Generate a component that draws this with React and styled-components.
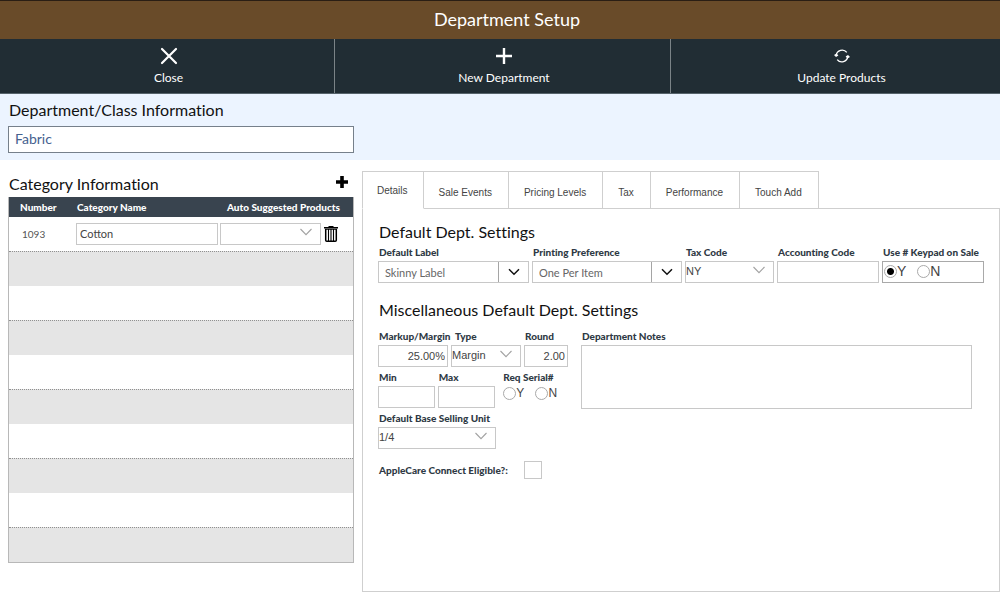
import { useState } from "react";
import styled, { createGlobalStyle, css } from "styled-components";

const tabs = [
  "Details",
  "Sale Events",
  "Pricing Levels",
  "Tax",
  "Performance",
  "Touch Add",
];

const emptyRows = [1, 2, 3, 4, 5, 6, 7, 8, 9];

function CloseIcon() {
  return (
    <svg width="18" height="18" viewBox="0 0 18 18" aria-hidden="true">
      <path
        d="M2 2L16 16M16 2L2 16"
        stroke="#fff"
        strokeWidth="2.2"
        strokeLinecap="round"
      />
    </svg>
  );
}

function PlusIcon() {
  return (
    <svg width="18" height="18" viewBox="0 0 18 18" aria-hidden="true">
      <path d="M9 1V17M1 9H17" stroke="#fff" strokeWidth="2.4" />
    </svg>
  );
}

function RefreshIcon() {
  return (
    <svg width="18" height="18" viewBox="0 0 18 18" aria-hidden="true">
      <g fill="none" stroke="#fff" strokeWidth="1.3">
        <path d="M3.2 8.4A6 6 0 0 1 13.8 5.4" />
        <path d="M14.8 9.6A6 6 0 0 1 4.2 12.6" />
      </g>
      <path d="M1 8L3.6 6.4L5.4 8.6L3 10Z" fill="#fff" />
      <path d="M17 10L14.4 11.6L12.6 9.4L15 8Z" fill="#fff" />
    </svg>
  );
}

function AddIcon() {
  return (
    <svg width="12" height="12" viewBox="0 0 12 12" aria-hidden="true">
      <path d="M6 0V12M0 6H12" stroke="#000" strokeWidth="3.6" />
    </svg>
  );
}

function TrashIcon() {
  return (
    <svg width="14" height="16" viewBox="0 0 14 16" aria-hidden="true">
      <path d="M0 1H4.5V0H9.5V1H14V2.4H0Z" fill="#000" />
      <path
        d="M1.7 3V14.2Q1.7 15.2 2.7 15.2H11.3Q12.3 15.2 12.3 14.2V3"
        fill="none"
        stroke="#000"
        strokeWidth="1.5"
      />
      <path
        d="M1 3.2H13M4.5 3V15M7 3V15M9.5 3V15"
        stroke="#000"
        strokeWidth="1.1"
      />
    </svg>
  );
}

function Chevron({ dark }) {
  return (
    <svg width="12" height="8" viewBox="0 0 12 8" aria-hidden="true">
      <path
        d={dark ? "M1 1.2L6 6.2L11 1.2" : "M0.5 1L6 6.6L11.5 1"}
        fill="none"
        stroke={dark ? "#111" : "#a2a2a2"}
        strokeWidth={dark ? 1.5 : 1.1}
      />
    </svg>
  );
}

function Dropdown({ id, label, value, combo }) {
  return (
    <SelectWrap>
      <Select id={id} aria-label={label} defaultValue={value} $combo={combo}>
        <option>{value}</option>
      </Select>
      <Arrow $combo={combo}>
        <Chevron dark={combo} />
      </Arrow>
    </SelectWrap>
  );
}

function YesNo({ name, label, value, boxed }) {
  const [picked, setPicked] = useState(value);
  return (
    <RadioGroup role="radiogroup" aria-label={label} $boxed={boxed}>
      {["Y", "N"].map((option) => (
        <RadioLabel key={option} $boxed={boxed}>
          <Radio
            type="radio"
            name={name}
            checked={picked === option}
            onChange={() => setPicked(option)}
          />
          {option}
        </RadioLabel>
      ))}
    </RadioGroup>
  );
}

function App() {
  const [active, setActive] = useState("Details");

  return (
    <Page>
      <GlobalStyle />
      <TitleBar>
        <h1>Department Setup</h1>
      </TitleBar>
      <Toolbar>
        <ToolButton type="button">
          <CloseIcon />
          Close
        </ToolButton>
        <ToolButton type="button">
          <PlusIcon />
          New Department
        </ToolButton>
        <ToolButton type="button">
          <RefreshIcon />
          Update Products
        </ToolButton>
      </Toolbar>
      <ClassInfo>
        <Heading as="label" htmlFor="department">
          Department/Class Information
        </Heading>
        <NameInput id="department" defaultValue="Fabric" />
      </ClassInfo>
      <Main>
        <Category>
          <CategoryHead>
            <Heading>Category Information</Heading>
            <IconButton type="button" aria-label="Add category">
              <AddIcon />
            </IconButton>
          </CategoryHead>
          <Table>
            <colgroup>
              <col width="64" />
              <col width="147" />
              <col />
              <col width="30" />
            </colgroup>
            <thead>
              <tr>
                <th>Number</th>
                <th>Category Name</th>
                <th colSpan="2">Auto Suggested Products</th>
              </tr>
            </thead>
            <tbody>
              <tr>
                <td>1093</td>
                <td>
                  <CategoryInput
                    aria-label="Category Name"
                    defaultValue="Cotton"
                  />
                </td>
                <td>
                  <Dropdown label="Auto Suggested Products" value="" />
                </td>
                <td>
                  <IconButton type="button" aria-label="Delete category">
                    <TrashIcon />
                  </IconButton>
                </td>
              </tr>
              {emptyRows.map((row) => (
                <tr key={row}>
                  <td colSpan="4" />
                </tr>
              ))}
            </tbody>
          </Table>
        </Category>
        <Details>
          <Tabs role="tablist">
            {tabs.map((tab) => (
              <Tab
                key={tab}
                type="button"
                role="tab"
                aria-selected={active === tab}
                $active={active === tab}
                onClick={() => setActive(tab)}
              >
                {tab}
              </Tab>
            ))}
            <TabFill />
          </Tabs>
          <Panel role="tabpanel">
            <Heading>Default Dept. Settings</Heading>
            <DefaultFields>
              <Field>
                <Label htmlFor="defaultLabel">Default Label</Label>
                <Dropdown id="defaultLabel" value="Skinny Label" combo />
              </Field>
              <Field>
                <Label htmlFor="printing">Printing Preference</Label>
                <Dropdown id="printing" value="One Per Item" combo />
              </Field>
              <Field>
                <Label htmlFor="taxCode">Tax Code</Label>
                <Dropdown id="taxCode" value="NY" />
              </Field>
              <Field>
                <Label htmlFor="accounting">Accounting Code</Label>
                <Input id="accounting" />
              </Field>
              <Field>
                <Label as="span">Use # Keypad on Sale</Label>
                <YesNo
                  name="keypad"
                  label="Use # Keypad on Sale"
                  value="Y"
                  boxed
                />
              </Field>
            </DefaultFields>
            <Heading>Miscellaneous Default Dept. Settings</Heading>
            <Misc>
              <MiscFields>
                <FieldRow>
                  <Field $width={70}>
                    <Label htmlFor="markup">Markup/Margin</Label>
                    <Input id="markup" defaultValue="25.00%" $right />
                  </Field>
                  <Field $width={70}>
                    <Label htmlFor="type" $indent>
                      Type
                    </Label>
                    <Dropdown id="type" value="Margin" />
                  </Field>
                  <Field $width={44}>
                    <Label htmlFor="round">Round</Label>
                    <Input id="round" defaultValue="2.00" $right />
                  </Field>
                </FieldRow>
                <FieldRow>
                  <Field $width={57}>
                    <Label htmlFor="min">Min</Label>
                    <Input id="min" />
                  </Field>
                  <Field $width={58}>
                    <Label htmlFor="max">Max</Label>
                    <Input id="max" />
                  </Field>
                  <Field $width={66} $push>
                    <Label as="span">Req Serial#</Label>
                    <YesNo name="serial" label="Req Serial#" />
                  </Field>
                </FieldRow>
                <Field $width={118}>
                  <Label htmlFor="unit">Default Base Selling Unit</Label>
                  <Dropdown id="unit" value="1/4" />
                </Field>
                <CheckRow>
                  <Label as="span">AppleCare Connect Eligible?:</Label>
                  <Checkbox type="checkbox" />
                </CheckRow>
              </MiscFields>
              <NotesField>
                <Label htmlFor="notes">Department Notes</Label>
                <Notes id="notes" />
              </NotesField>
            </Misc>
          </Panel>
        </Details>
      </Main>
    </Page>
  );
}

const GlobalStyle = createGlobalStyle`
  * {
    box-sizing: border-box;
  }
  body {
    margin: 0;
    background: #fff;
    font-family: Lato, "Liberation Sans", sans-serif;
    font-variant-ligatures: none;
    overflow-x: hidden;
  }
  button,
  input,
  select,
  textarea {
    font-family: inherit;
    margin: 0;
  }
  svg {
    display: block;
  }
`;

const Page = styled.div`
  display: flex;
  flex-direction: column;
  min-height: 100vh;
`;

const TitleBar = styled.header`
  height: 39px;
  background: #694b29;
  border-top: 1px solid #2a1e14;
  color: #fff;
  text-align: center;
  h1 {
    margin: 0;
    padding-left: 14px;
    font-size: 18px;
    font-weight: 400;
    line-height: 37px;
  }
`;

/* runs a little past the right edge */
const Toolbar = styled.nav`
  display: grid;
  grid-template-columns: 335fr 336fr 339fr;
  width: calc(100% + 10px);
  height: 55px;
  background: #212d34;
  border-bottom: 1px solid #56636b;
`;

const ToolButton = styled.button`
  display: flex;
  flex-direction: column;
  align-items: center;
  gap: 5px;
  padding: 8px 0 0 3px;
  background: none;
  border: 0;
  border-right: 1px solid #7b8387;
  color: #fff;
  font-size: 12px;
  line-height: 16px;
`;

const Heading = styled.h2`
  display: block;
  margin: 0;
  padding-left: 1px;
  color: #111;
  font-size: 16px;
  font-weight: 400;
  line-height: 20px;
`;

const ClassInfo = styled.section`
  height: 66px;
  padding: 6px 8px;
  background: #ecf4ff;
`;

const NameInput = styled.input`
  display: block;
  width: 346px;
  height: 27px;
  margin-top: 6px;
  padding: 0 6px 2px;
  background: #fff;
  border: 1px solid #76808b;
  color: #45618f;
  font-size: 14px;
`;

const Main = styled.main`
  display: flex;
  flex: 1;
  gap: 8px;
  padding: 11px 0 0 8px;
`;

const Category = styled.section`
  flex: none;
  width: 346px;
  padding-top: 3px;
`;

const CategoryHead = styled.div`
  display: flex;
  justify-content: space-between;
  height: 23px;
  padding-right: 6px;
`;

const IconButton = styled.button`
  display: flex;
  align-items: center;
  height: 16px;
  padding: 0;
  background: none;
  border: 0;
`;

const Table = styled.table`
  width: 100%;
  table-layout: fixed;
  border-spacing: 0;
  border: 1px solid #b8b8b8;
  border-top: 0;
  th {
    height: 20px;
    padding: 0 4px;
    background: #39444f;
    color: #fff;
    font-size: 10px;
    font-weight: 900;
    line-height: 12px;
    text-align: left;
  }
  th:first-child {
    padding-left: 11px;
  }
  th:last-child {
    padding: 0 13px 0 0;
    text-align: right;
  }
  td {
    height: 34px;
    padding: 0 2px 0 0;
    color: #555;
    font-size: 10px;
  }
  td:first-child {
    padding-left: 13px;
  }
  td:nth-child(2) {
    padding-left: 3px;
  }
  td:nth-child(4) {
    padding-left: 1px;
  }
  tbody tr:nth-child(even) td {
    height: 35px;
    background: #e5e5e5;
    border-top: 1px dotted #909090;
  }
`;

const control = css`
  display: block;
  width: 100%;
  height: 22px;
  background: #fff;
  border: 1px solid #c8c8c8;
  border-radius: 0;
  color: #444;
  font-family: "Liberation Sans", Arial, sans-serif;
  font-size: 11px;
`;

const Input = styled.input`
  ${control}
  padding: 0 2px;
  text-align: ${({ $right }) => ($right ? "right" : "left")};
`;

const CategoryInput = styled.input`
  ${control}
  padding: 0 3px 2px;
  font-family: Lato, sans-serif;
`;

const SelectWrap = styled.div`
  position: relative;
`;

const Select = styled.select`
  ${control}
  appearance: none;
  padding: 0 20px 3px 0;
  ${({ $combo }) =>
    $combo &&
    css`
      padding: 0 30px 0 6px;
      color: #666;
      font-family: Lato, sans-serif;
    `}
`;

const Arrow = styled.span`
  position: absolute;
  top: ${({ $combo }) => ($combo ? "1px" : "0")};
  right: ${({ $combo }) => ($combo ? "1px" : "9px")};
  bottom: ${({ $combo }) => ($combo ? "1px" : "4px")};
  display: flex;
  align-items: center;
  justify-content: center;
  pointer-events: none;
  ${({ $combo }) =>
    $combo &&
    css`
      width: 30px;
      border-left: 1px solid #a5a5a5;
    `}
`;

const Details = styled.section`
  display: flex;
  flex: 1;
  flex-direction: column;
  min-width: 0;
`;

const Tabs = styled.div`
  display: flex;
  height: 38px;
`;

const Tab = styled.button`
  padding: 4px 16px 0 15px;
  background: #fff;
  border: 1px solid #cfcfcf;
  border-left-width: 0;
  color: #444;
  font-family: "Liberation Sans", Arial, sans-serif;
  font-size: 10px;
  white-space: nowrap;
  &:first-child {
    padding: 4px 15px 0 14px;
    border-left-width: 1px;
  }
  ${({ $active }) =>
    $active &&
    css`
      &&& {
        padding-top: 0;
        border-bottom-color: #fff;
      }
    `}
`;

const TabFill = styled.div`
  flex: 1;
  border-bottom: 1px solid #cfcfcf;
`;

const Panel = styled.div`
  flex: 1;
  padding: 13px 15px 0;
  border: 1px solid #cfcfcf;
  border-top: 0;
`;

const DefaultFields = styled.div`
  display: grid;
  grid-template-columns: 151fr 150fr 89fr 102fr 102fr;
  column-gap: 3px;
  margin: 4px 0 17px;
`;

const Field = styled.div`
  width: ${({ $width }) => ($width ? `${$width}px` : "auto")};
  margin-left: ${({ $push }) => ($push ? "4px" : "0")};
`;

const Label = styled.label`
  display: block;
  padding-left: ${({ $indent }) => ($indent ? "4px" : "1px")};
  color: #2f3a45;
  font-size: 10px;
  font-weight: 900;
  line-height: 12px;
  margin-bottom: 3px;
  white-space: nowrap;
`;

const RadioGroup = styled.div`
  display: flex;
  gap: 11px;
  height: ${({ $boxed }) => ($boxed ? "22px" : "16px")};
  padding: 0 0 2px 1px;
  border: ${({ $boxed }) => ($boxed ? "1px solid #a9a9a9" : "0")};
`;

const RadioLabel = styled.label`
  display: flex;
  align-items: center;
  color: #444;
  font-family: "Liberation Sans", Arial, sans-serif;
  font-size: ${({ $boxed }) => ($boxed ? "14px" : "12px")};
  line-height: 14px;
`;

const Radio = styled.input`
  appearance: none;
  width: 13px;
  height: 13px;
  border: 1px solid #a9a9a9;
  border-radius: 50%;
  background: #fff;
  &:checked {
    background: radial-gradient(circle, #000 3px, #fff 4px);
  }
`;

const Misc = styled.div`
  display: flex;
  gap: 13px;
  margin-top: 10px;
  padding-right: 12px;
`;

const MiscFields = styled.div`
  display: flex;
  flex: none;
  flex-direction: column;
  gap: 4px;
  width: 190px;
`;

const FieldRow = styled.div`
  display: flex;
  gap: 3px;
`;

const CheckRow = styled.label`
  display: flex;
  align-items: center;
  gap: 16px;
  margin-top: 8px;
  ${Label} {
    margin: 0;
  }
`;

const Checkbox = styled.input`
  appearance: none;
  width: 18px;
  height: 18px;
  background: #fff;
  border: 1px solid #c8c8c8;
`;

const NotesField = styled.div`
  flex: 1;
`;

const Notes = styled.textarea`
  ${control}
  height: 64px;
  padding: 3px;
  resize: none;
`;

export default App;
